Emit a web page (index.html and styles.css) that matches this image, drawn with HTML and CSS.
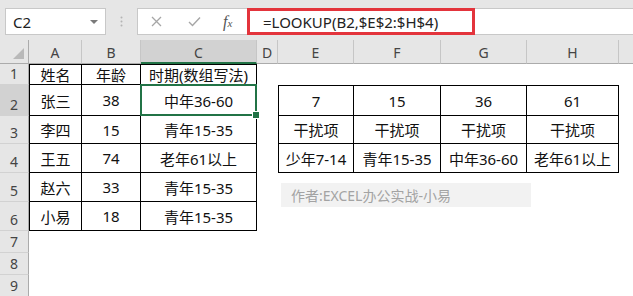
FILE: index.html
```html
<!DOCTYPE html>
<html lang="zh">
<head>
<meta charset="utf-8">
<link rel="stylesheet" href="styles.css">
</head>
<body>
<div class="app">
  <div class="fbar">
    <div class="namebox"><span class="nb-text">C2</span><span class="caret"></span></div>
    <div class="dots">
      <svg width="3" height="11" viewBox="0 0 3 11"><circle cx="1.5" cy="1.5" r="1" fill="#b4b4b4"/><circle cx="1.5" cy="5.5" r="1" fill="#b4b4b4"/><circle cx="1.5" cy="9.5" r="1" fill="#b4b4b4"/></svg>
    </div>
    <div class="fx-wrap">
      <div class="fx-btns">
        <svg class="ico-x" width="11" height="11" viewBox="0 0 11 11"><path d="M1 1L10 10M10 1L1 10" stroke="#a6a6a6" stroke-width="1.3" fill="none"/></svg>
        <svg class="ico-ok" width="13" height="11" viewBox="0 0 13 11"><path d="M1 6L4.5 9.5L12 1.5" stroke="#a6a6a6" stroke-width="1.4" fill="none"/></svg>
        <span class="fx">f<span class="fx-sub">x</span></span>
      </div>
      <div class="formula"><span class="hl">=LOOKUP(B2,$E$2:$H$4)</span></div>
    </div>
  </div>

  <div class="sheet">
    <div class="corner"><svg width="11" height="11" viewBox="0 0 11 11"><polygon points="11,0 11,11 0,11" fill="#b9b9b9"/></svg></div>
    <div class="ch">A</div>
    <div class="ch">B</div>
    <div class="ch ch-sel">C</div>
    <div class="ch">D</div>
    <div class="ch">E</div>
    <div class="ch">F</div>
    <div class="ch">G</div>
    <div class="ch">H</div>
    <div class="ch ch-last"></div>

    <div class="rh">1</div>
    <div class="c b bt bl">姓名</div>
    <div class="c b bt">年龄</div>
    <div class="c b bt">时期(数组写法)</div>
    <div class="c"></div><div class="c"></div><div class="c"></div><div class="c"></div><div class="c"></div><div class="c"></div>

    <div class="rh rh-sel">2</div>
    <div class="c b bl">张三</div>
    <div class="c b">38</div>
    <div class="c b sel">中年36-60</div>
    <div class="c"></div>
    <div class="c b bt bl">7</div>
    <div class="c b bt">15</div>
    <div class="c b bt">36</div>
    <div class="c b bt">61</div>
    <div class="c"></div>

    <div class="rh">3</div>
    <div class="c b bl">李四</div>
    <div class="c b">15</div>
    <div class="c b">青年15-35</div>
    <div class="c"></div>
    <div class="c b bl">干扰项</div>
    <div class="c b">干扰项</div>
    <div class="c b">干扰项</div>
    <div class="c b">干扰项</div>
    <div class="c"></div>

    <div class="rh">4</div>
    <div class="c b bl">王五</div>
    <div class="c b">74</div>
    <div class="c b">老年61以上</div>
    <div class="c"></div>
    <div class="c b bl">少年7-14</div>
    <div class="c b">青年15-35</div>
    <div class="c b">中年36-60</div>
    <div class="c b">老年61以上</div>
    <div class="c"></div>

    <div class="rh">5</div>
    <div class="c b bl">赵六</div>
    <div class="c b">33</div>
    <div class="c b">青年15-35</div>
    <div class="c rest"></div>

    <div class="rh">6</div>
    <div class="c b bl">小易</div>
    <div class="c b">18</div>
    <div class="c b">青年15-35</div>
    <div class="c rest"></div>

    <div class="rh">7</div>
    <div class="c all"></div>
    <div class="rh">8</div>
    <div class="c all"></div>
    <div class="rh">9</div>
    <div class="c all"></div>

    <div class="note">作者:EXCEL办公实战-小易</div>
  </div>
</div>
</body>
</html>
```

FILE: styles.css
```css
* { box-sizing: border-box; }

body {
  margin: 0;
  background: #ffffff;
  font-family: "Noto Sans", "Noto Sans CJK SC", sans-serif;
}

.app {
  width: 633px;
  height: 296px;
  overflow: hidden;
}

/* ---------- formula bar ---------- */
.fbar {
  height: 40px;
  background: #e6e6e6;
  display: flex;
  align-items: flex-start;
  padding-top: 8px;
}

.namebox {
  margin-left: 5px;
  width: 101px;
  height: 27px;
  background: #ffffff;
  border: 1px solid #c8c8c8;
  display: flex;
  align-items: center;
  justify-content: space-between;
  padding: 0 7px 0 7px;
  font-size: 15px;
  color: #222222;
}

.caret {
  width: 0;
  height: 0;
  border-left: 4px solid transparent;
  border-right: 4px solid transparent;
  border-top: 4px solid #7a7a7a;
}

.dots {
  width: 31px;
  height: 27px;
  display: flex;
  align-items: center;
  justify-content: center;
}

.fx-wrap {
  flex: 1;
  height: 27px;
  display: flex;
  background: #ffffff;
  border: 1px solid #c8c8c8;
  border-right: none;
}

.fx-btns {
  width: 109px;
  display: flex;
  align-items: center;
  padding-left: 13px;
}

.ico-x { margin-right: 26px; }
.ico-ok { margin-right: 22px; }

.fx {
  font-family: "Liberation Serif", serif;
  font-style: italic;
  font-size: 16px;
  color: #555555;
  line-height: 1;
}

.fx-sub {
  font-size: 11px;
}

.formula {
  flex: 1;
  display: flex;
  margin-top: -1px;
}

.hl {
  width: 228px;
  height: 27px;
  border: 3px solid #e3343c;
  display: flex;
  align-items: center;
  padding-left: 13px;
  font-size: 15px;
  color: #222222;
}

/* ---------- sheet ---------- */
.sheet {
  position: relative;
  display: grid;
  grid-template-columns: 29px 53px 59px 116px 21px 76px 87px 86px 92px 1fr;
  grid-template-rows: 24px 21px 31px 28px 29px 29px 29px 22px 22px 22px;
}

.corner {
  background: #e6e6e6;
  border-bottom: 1px solid #ababab;
  border-right: 1px solid #ababab;
  display: flex;
  align-items: flex-end;
  justify-content: flex-end;
  padding: 0 4px 4px 0;
}

.ch {
  background: #e6e6e6;
  border-right: 1px solid #c6c6c6;
  border-bottom: 1px solid #ababab;
  display: flex;
  align-items: center;
  justify-content: center;
  font-size: 14px;
  color: #444444;
  padding-top: 2px;
}

.ch-sel {
  background: #d2d2d2;
  border-bottom: 2px solid #217346;
}

.ch-last { border-right: none; }

.rh {
  background: #e6e6e6;
  border-right: 1px solid #ababab;
  border-bottom: 1px solid #d2d2d2;
  display: flex;
  align-items: flex-end;
  justify-content: center;
  font-size: 14px;
  color: #444444;
  padding-bottom: 1px;
  line-height: 1.2;
}

.rh-sel {
  background: #d2d2d2;
}

.c {
  display: flex;
  align-items: center;
  justify-content: center;
  font-size: 15px;
  color: #111111;
  white-space: nowrap;
}

.b {
  border-right: 1px solid #000000;
  border-bottom: 1px solid #000000;
}

.bt { border-top: 1px solid #000000; }
.bl { border-left: 1px solid #000000; }

.rest { grid-column: 5 / -1; }
.all { grid-column: 2 / -1; }

.sel { position: relative; }

.sel::after {
  content: "";
  position: absolute;
  left: -1px;
  top: -1px;
  right: -1px;
  bottom: -1px;
  border: 2px solid #217346;
}

.sel::before {
  content: "";
  position: absolute;
  right: -4px;
  bottom: -4px;
  width: 6px;
  height: 6px;
  background: #217346;
  border: 1px solid #ffffff;
  z-index: 2;
}

.note {
  position: absolute;
  left: 281px;
  top: 143px;
  width: 250px;
  height: 24px;
  background: #f2f2f2;
  color: #a3a3a3;
  font-size: 14px;
  display: flex;
  align-items: center;
  padding-left: 10px;
  white-space: nowrap;
}
```
